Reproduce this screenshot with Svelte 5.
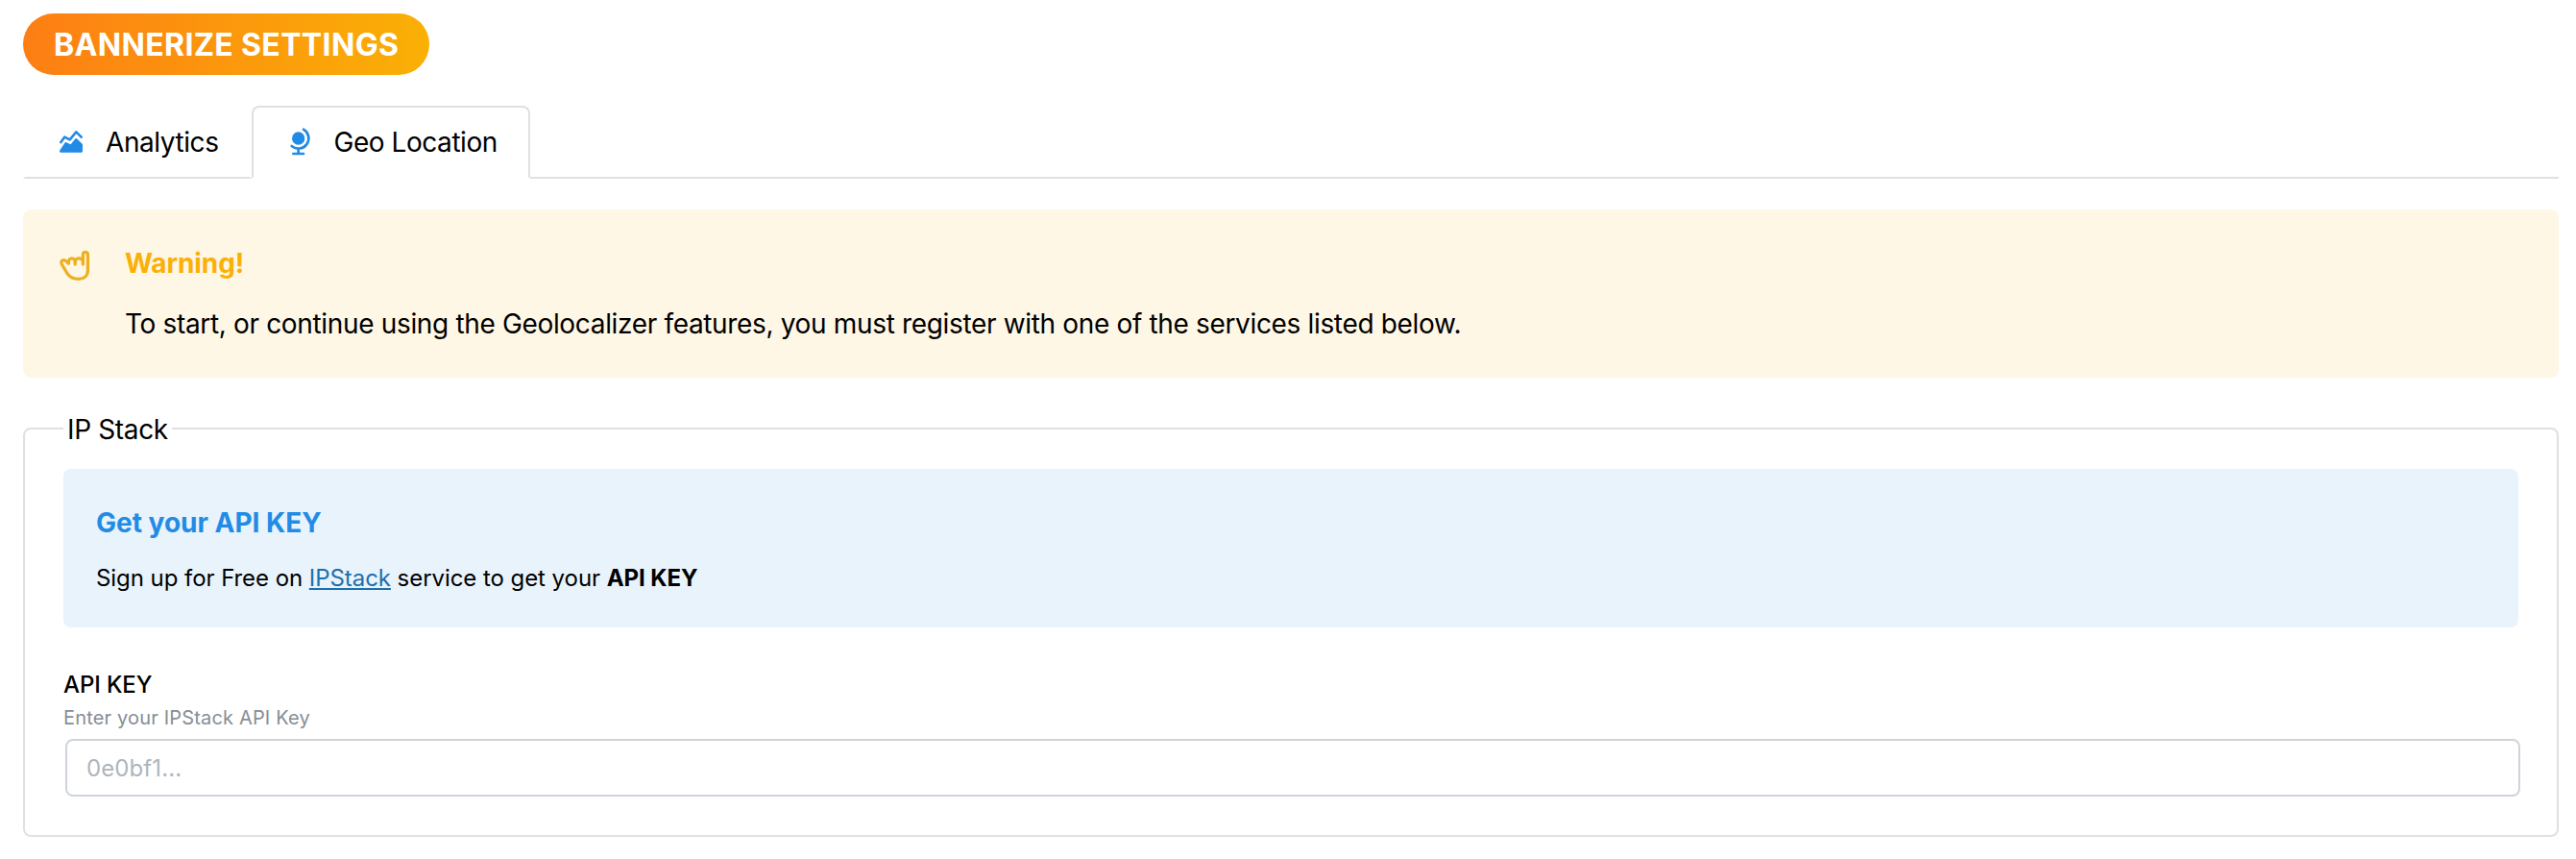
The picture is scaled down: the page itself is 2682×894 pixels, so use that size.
<script>
  let apiKey = $state('');
</script>

<main>
  <h1>BANNERIZE SETTINGS</h1>
  <nav>
    <button class="tab">
      <svg width="32" height="32" viewBox="0 0 24 24" fill="currentColor">
        <path d="M15.22 9.375a1 1 0 0 1 1.393 -.165l.094 .083l4 4a1 1 0 0 1 .284 .576l.009 .131v5a1 1 0 0 1 -.883 .993l-.117 .007h-16.022l-.11 -.009l-.11 -.02l-.107 -.034l-.105 -.046l-.1 -.059l-.094 -.07l-.06 -.055l-.072 -.082l-.064 -.089l-.054 -.096l-.016 -.035l-.04 -.103l-.027 -.106l-.015 -.108l-.004 -.11l.009 -.11l.019 -.105c.01 -.04 .022 -.077 .035 -.112l.046 -.105l.059 -.1l4 -6a1 1 0 0 1 1.165 -.39l.114 .05l3.277 1.638l3.495 -4.369z" />
        <path d="M15.232 3.36a1 1 0 0 1 1.382 -.15l.093 .083l4 4a1 1 0 0 1 -1.32 1.497l-.094 -.083l-3.226 -3.225l-4.299 5.158a1 1 0 0 1 -1.1 .303l-.115 -.049l-3.254 -1.626l-2.499 3.332a1 1 0 0 1 -1.295 .269l-.105 -.069a1 1 0 0 1 -.269 -1.295l.069 -.105l3 -4a1 1 0 0 1 1.137 -.341l.11 .047l3.291 1.645l4.494 -5.391z" />
      </svg>
      <span>Analytics</span>
    </button>
    <button class="tab active">
      <svg width="32" height="32" viewBox="0 0 24 24" fill="none" stroke="currentColor" stroke-width="2" stroke-linecap="round" stroke-linejoin="round">
        <circle cx="11" cy="9" r="4" fill="currentColor" />
        <path d="M5.75 15a8.015 8.015 0 1 0 9.25 -13M11 17v4M7 21h8" />
      </svg>
      <span>Geo Location</span>
    </button>
    <div class="rule"></div>
  </nav>

  <section class="warning">
    <svg width="36" height="36" viewBox="0 0 36 36" fill="none" stroke="currentColor" stroke-width="3.300" stroke-linecap="round" stroke-linejoin="round">
      <path d="M11.400 16.200V14.400a3.400 3.600 0 0 1 6.800 0V17M18.200 14.400a4 3.600 0 0 1 8 0M26.400 17V6.800a2.500 2.500 0 0 1 5 0V23.500C31.400 29 27.500 32.300 22 32.300C16.500 32.300 13 31 10.200 26.800C8.200 23.700 6 20 4.200 16.800C3 14.600 4.200 12.700 6 12.600C8.200 12.500 9.700 14.400 11.400 16.200" />
    </svg>
    <div>
      <h2>Warning!</h2>
      <p>To start, or continue using the Geolocalizer features, you must register with one of the services listed below.</p>
    </div>
  </section>

  <fieldset>
    <legend>IP Stack</legend>
    <div class="info">
      <h3>Get your API KEY</h3>
      <p>Sign up for Free on <a href="#ipstack">IPStack</a> service to get your <b>API KEY</b></p>
    </div>
    <label for="key">API KEY</label>
    <small>Enter your IPStack API Key</small>
    <input id="key" placeholder="0e0bf1..." bind:value={apiKey} />
  </fieldset>
</main>

<style>
  :global(body) { background: #fff; }
  main { font-family: Inter, sans-serif; color: #000; padding: 14px 18px 0 24px; font-size: 28px; }
  h1, h2, h3, p { margin: 0; }
  h1 { width: fit-content; box-sizing: border-box; height: 64px; padding: 0 32px; border-radius: 32px; background: linear-gradient(90deg, #fd7e14, #fab005); color: #fff; font-size: 32px; line-height: 66px; font-weight: 700; letter-spacing: 0.35px; }
  nav { display: flex; margin-top: 32px; height: 76px; }
  .rule { flex: 1; border-bottom: 2px solid #dee0e2; }
  .tab { display: flex; align-items: center; gap: 20px; box-sizing: border-box; border: 2px solid transparent; border-bottom-color: #dee0e2; background: none; padding: 0 32px; font: 400 28px Inter, sans-serif; letter-spacing: -0.43px; color: #000; white-space: nowrap; }
  .active { border-color: #dee0e2; border-bottom-color: transparent; border-radius: 8px 8px 0 0; letter-spacing: -0.45px; }
  .tab svg { color: #228be6; flex: none; }
  .warning { display: flex; gap: 34px; margin-top: 32px; height: 175px; box-sizing: border-box; padding: 34px 36px; background: #fff7e6; border-radius: 8px; }
  .warning svg { color: #edb120; margin-top: 6px; flex: none; }
  h2 { font-size: 28px; line-height: 44px; color: #fab005; font-weight: 700; letter-spacing: -0.1px; }
  .warning p { line-height: 44px; margin-top: 19px; letter-spacing: -0.34px; }
  fieldset { margin: 30px 0 0; border: 2px solid #dee0e2; border-radius: 8px; padding: 19px 40px 40px; box-sizing: border-box; }
  legend { padding: 2px 4px 0; line-height: 44px; letter-spacing: -0.35px; }
  .info { background: #e8f3fc; border-radius: 8px; height: 165px; box-sizing: border-box; padding: 34px; }
  h3 { font-size: 28px; line-height: 44px; color: #228be6; }
  .info p { font-size: 24px; line-height: 36px; margin-top: 18px; letter-spacing: -0.06px; }
  a { color: #1c6fae; }
  label { display: block; font-size: 24px; font-weight: 500; line-height: 36px; margin-top: 42px; letter-spacing: -0.1px; }
  small { display: block; font-size: 20px; line-height: 24px; color: #868e96; margin-top: 4px; letter-spacing: 0.17px; }
  input { display: block; box-sizing: border-box; width: 100%; height: 60px; border: 2px solid #ced4da; border-radius: 8px; padding: 0 20px; font: 24px Inter, sans-serif; letter-spacing: 0.1px; margin: 10px 0 0 2px; }
  input::placeholder { color: #adb5bd; opacity: 1; }
</style>
